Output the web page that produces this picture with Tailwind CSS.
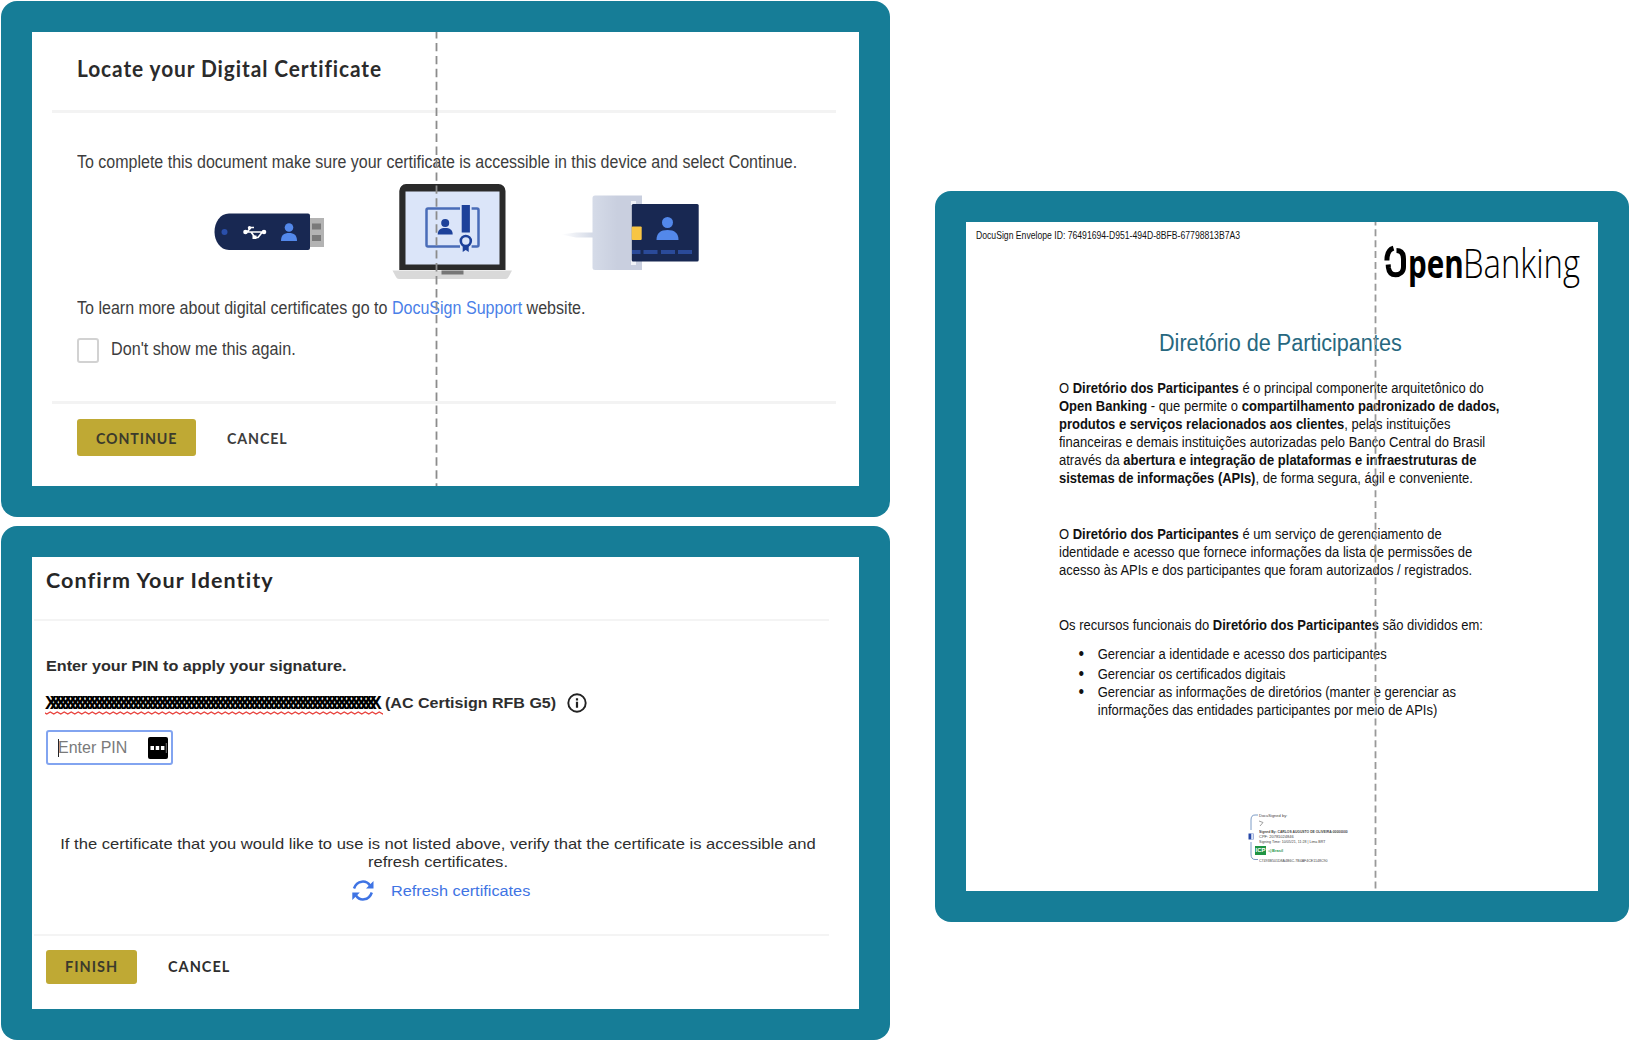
<!DOCTYPE html>
<html lang="pt-BR">
<head>
<meta charset="utf-8">
<title>Certificate signing</title>
<script src="https://cdn.jsdelivr.net/npm/@tailwindcss/browser@4"></script>
</head>
<body class="bg-white font-['Liberation_Sans',sans-serif] whitespace-nowrap overflow-hidden">
<main class="w-[1630px] h-[1041px] pl-px pt-px flex items-start gap-[45px]">

  <div class="flex flex-col gap-[9px]">

    <!-- Locate certificate -->
    <section class="relative w-[889px] h-[516px] rounded-2xl bg-[#167d97] p-[31px]">
      <div class="w-[827px] h-[454px] bg-white overflow-hidden text-[#3d3d3d]">
        <h1 class="mt-[22px] ml-[45px] h-7 leading-7 text-[23px] font-bold font-['Lato',sans-serif] tracking-[1px] origin-left scale-x-[.908] text-[#2b2b2b]">Locate your Digital Certificate</h1>
        <div class="mt-[28px] ml-5 w-[784px] h-[3px] bg-[#f3f3f3]"></div>
        <p class="mt-[39px] ml-[45px] h-5 leading-[21px] text-[17.5px] origin-left scale-x-[.914] w-[788px]">To complete this document make sure your certificate is accessible in this device and select Continue.</p>

        <div class="mt-2 ml-[182px] flex h-[100px]">
          <svg class="w-28 h-[100px]" viewBox="214 180 112 100">
            <rect x="309" y="218" width="15" height="29" fill="#b3b3b3"/>
            <path d="M312 223.500h9v6h-9zM312 235h9v6h-9z" fill="#7a7a7a"/>
            <path d="M229 213.500h79a2 2 0 0 1 2 2v32.500a2 2 0 0 1-2 2h-79c-9 0-14.500-9-14.500-18.200s5.500-18.300 14.500-18.300z" fill="#182852"/>
            <circle cx="224.500" cy="232" r="3" fill="#2a4faa"/>
            <g stroke="#fff" stroke-width="1.700" fill="none"><path d="M244 232h21M247 232l4-4.500h3M251 232l4 5.500h3l4-5"/></g>
            <g fill="#fff"><circle cx="245.500" cy="232" r="2.300"/><circle cx="264" cy="232" r="2.300"/><circle cx="249.500" cy="227.800" r="1.700"/><rect x="252.500" y="235.500" width="4" height="3.500"/></g>
            <circle cx="289" cy="227.500" r="4.300" fill="#5388ea"/>
            <path d="M281 241c0-6 3-8 8-8s8 2 8 8z" fill="#5388ea"/>
          </svg>
          <svg class="ml-16 w-[124px] h-[100px]" viewBox="390 180 124 100">
            <path d="M406 184h92.500a7 7 0 0 1 7 7v79h-106.200v-79a7 7 0 0 1 6.700-7z" fill="#2a2a2a"/>
            <rect x="405.500" y="191.500" width="94" height="73" fill="#dbe5f9"/>
            <path d="M392.500 270.500h119.500l-3.500 6.500q-.8 2-3 2h-106.500q-2.200 0-3-2z" fill="#d9d9d9"/>
            <path d="M441.500 270.500h22v4h-22z" fill="#777"/>
            <rect x="426.500" y="208.500" width="52" height="38" rx="1.500" fill="none" stroke="#4a6cb8" stroke-width="2.500"/>
            <rect x="460" y="204" width="11.600" height="45" fill="#dbe5f9"/>
            <rect x="461.700" y="205" width="8.200" height="27.500" fill="#1d419a"/>
            <circle cx="465.800" cy="241" r="5" fill="#dbe5f9" stroke="#1d419a" stroke-width="2.600"/>
            <path d="M462.700 246v6l3-2 3 2v-6z" fill="#1d419a"/>
            <circle cx="445.200" cy="223" r="4" fill="#1d419a"/>
            <path d="M437.700 234.500c0-5 3-6.500 7.500-6.500s7.500 1.500 7.500 6.500z" fill="#1d419a"/>
          </svg>
          <svg class="ml-[46px] w-[140px] h-[100px]" viewBox="560 180 140 100">
            <defs>
              <linearGradient id="reader"><stop offset="0" stop-color="#d5dbe8"/><stop offset=".5" stop-color="#c9cfdf"/></linearGradient>
              <linearGradient id="cord"><stop offset="0" stop-color="#d5dbe8" stop-opacity="0"/><stop offset="1" stop-color="#d3d9e6"/></linearGradient>
            </defs>
            <path d="M561 234.500l15-2h17v5h-17z" fill="url(#cord)"/>
            <path d="M595 195.500h47v74.500h-47a2.500 2.500 0 0 1-2.500-2.500v-69.500a2.500 2.500 0 0 1 2.500-2.500z" fill="url(#reader)"/>
            <rect x="631" y="201" width="5" height="64" fill="#f1f3f8"/>
            <rect x="631.700" y="204" width="67" height="57.500" rx="1.500" fill="#182852"/>
            <rect x="631.700" y="226.500" width="10" height="13.500" rx="1" fill="#f8c544"/>
            <circle cx="667.500" cy="222.500" r="5.500" fill="#5388ea"/>
            <path d="M656.500 240c0-7 4-10 11-10s11 3 11 10z" fill="#5388ea"/>
            <path d="M632 252h8.500M643.500 252h14M661 252h14M678 252h14" stroke="#2a4a99" stroke-width="4"/>
          </svg>
        </div>

        <p class="mt-[18px] ml-[45px] h-5 leading-[21px] text-[17.5px] origin-left scale-x-[.917] w-[556px]">To learn more about digital certificates go to <a class="text-[#4a7fe8]">DocuSign Support</a> website.</p>
        <label class="mt-5 ml-[45px] h-[25px] flex items-start">
          <span class="w-[22px] h-[25px] rounded-[3px] border-2 border-[#d2d2d2]"></span>
          <span class="mt-px ml-3 leading-[21px] text-[17.5px] origin-left scale-x-[.924]">Don't show me this again.</span>
        </label>
        <div class="mt-[38px] ml-5 w-[784px] h-[3px] bg-[#f3f3f3]"></div>
        <div class="mt-[15px] ml-[45px] flex items-center font-['Lato',sans-serif] font-bold text-[16px] tracking-[1px]">
          <button class="w-[119px] h-[37px] rounded-[3px] bg-[#bfa934] pl-[19px] text-left text-[#3b3a2c]"><span class="inline-block origin-left scale-x-[.89]">CONTINUE</span></button>
          <button class="ml-[31px] origin-left scale-x-[.89]">CANCEL</button>
        </div>
      </div>
      <svg class="absolute left-[434px] top-[31px] w-[3px] h-[454px]"><path d="M1.500-2V454" stroke="#8c8c8c" stroke-width="1.800" stroke-dasharray="8.400 4.550"/></svg>
    </section>

    <!-- Confirm identity -->
    <section class="w-[889px] h-[514px] rounded-2xl bg-[#167d97] p-[31px]">
      <div class="w-[827px] h-[452px] bg-white overflow-hidden text-[#2e2e2e]">
        <h1 class="mt-[11px] ml-[14px] h-6 leading-6 text-[20px] font-bold font-['Lato',sans-serif] tracking-[1px] origin-left scale-x-[1.075] w-[220px] text-[#262626]">Confirm Your Identity</h1>
        <div class="mt-[27px] ml-0.5 w-[795px] h-0.5 bg-[#f4f4f4]"></div>
        <p class="mt-[35px] ml-[14px] h-5 w-[300px] leading-5 text-[15.5px] font-bold origin-left scale-x-[1.045]">Enter your PIN to apply your signature.</p>
        <div class="mt-[17px] ml-[13px] h-[22px] flex items-start">
          <div class="w-[338px]">
            <div class="w-[338px] h-[18px] leading-5 text-[18px] font-bold text-black tracking-[-7.16px]">XXXXXXXXXXXXXXXXXXXXXXXXXXXXXXXXXXXXXXXXXXXXXXXXXXXXXXXXXXXXXXXXXXXX</div>
            <svg class="w-[338px] h-1"><defs><pattern id="wave" width="7" height="4" patternUnits="userSpaceOnUse"><path d="M-1.750 1L1.750 3L5.250 1L8.750 3" fill="none" stroke="#e8413c" stroke-width="1.400"/></pattern></defs><rect width="338" height="4" fill="url(#wave)"/></svg>
          </div>
          <span class="ml-0.5 leading-5 text-[15.5px] font-bold origin-left scale-x-[1.035]">(AC Certisign RFB G5)</span>
          <svg class="ml-[17px] w-5 h-5" viewBox="0 0 20 20"><circle cx="10" cy="10" r="8.700" fill="none" stroke="#222" stroke-width="1.900"/><path d="M8.900 5.300h2.200v2.200H8.900zM8.900 8.800h2.200v6H8.900z" fill="#222"/></svg>
        </div>
        <div class="mt-[15px] ml-[14px] w-[127px] h-[35px] rounded-[3px] border-2 border-[#82a4f0] flex items-center pl-[10px]">
          <span class="w-px h-[18px] bg-[#222]"></span>
          <span class="-ml-px text-[16px] text-[#7a7a7a] w-[68px]">Enter PIN</span>
          <svg class="ml-[22px] w-5 h-[22px]" viewBox="0 0 20 22"><rect width="20" height="22" rx="2" fill="#000"/><path d="M2.500 9h3.500v4h-3.500zM7.700 9h3.500v4h-3.500zM12.900 9h3.500v4h-3.500z" fill="#fff"/><path d="M18.300 6v10" stroke="#aaa" stroke-width=".7"/></svg>
        </div>
        <div class="mt-[70px] ml-[-15px] w-[842px] text-center text-[15px] leading-[18px] scale-x-[1.105]">
          <p>If the certificate that you would like to use is not listed above, verify that the certificate is accessible and</p>
          <p>refresh certificates.</p>
        </div>
        <div class="mt-[9px] ml-[319.5px] h-[21px] flex items-center text-[#3f74e4]">
          <svg class="w-[22px] h-[21px]" viewBox="0 0 22 21"><g fill="none" stroke="currentColor" stroke-width="2.500"><path d="M2 8.500C5-.3 14.500 0 18 5.500M19.800 12.500C16.800 21.300 7.500 21 4 15.500"/></g><path d="M21.500 1V8.500H14zM.3 20V12.500H7.800z" fill="currentColor"/></svg>
          <span class="ml-[17px] text-[15.5px] leading-5 origin-left scale-x-[1.05]">Refresh certificates</span>
        </div>
        <div class="mt-[33px] ml-0.5 w-[795px] h-0.5 bg-[#f4f4f4]"></div>
        <div class="mt-[14px] ml-[14px] flex items-center font-['Lato',sans-serif] font-bold text-[14.5px] tracking-[1px]">
          <button class="w-[91px] h-[34px] rounded-[3px] bg-[#bfa934] pl-[19px] text-left text-[#3b3a2c]">FINISH</button>
          <button class="ml-[31px]">CANCEL</button>
        </div>
      </div>
    </section>
  </div>

  <!-- Document -->
  <section class="relative mt-[190px] w-[694px] h-[731px] rounded-2xl bg-[#167d97] p-[31px]">
    <div class="w-[632px] h-[669px] bg-white overflow-hidden text-[#111]">
      <header class="h-[107px] flex items-start">
        <span class="mt-[6px] ml-[10px] w-[408px] h-[14px] leading-[14px] text-[11px]"><span class="inline-block origin-left scale-x-[.785]">DocuSign Envelope ID: 76491694-D951-494D-8BFB-67798813B7A3</span></span>
        <div class="mt-[19px] h-[50px] flex items-start text-black font-['Open_Sans',sans-serif] text-[40px] leading-[44px]">
          <svg class="mt-1 w-[23px] h-[34px]" viewBox="0 0 23 34"><g fill="none" stroke="#000" stroke-width="5"><path d="M9.500 3.200C5 4.500 2.900 8 2.900 15.500"/><path d="M12.500 5.500C17.500 5.500 19.500 9 19.500 14V22C19.500 27 16 29.800 11.500 29.800C8 29.800 5 27.500 4.400 22.500L4.200 19.500"/></g></svg>
          <span class="ml-px w-[55px] font-bold"><span class="inline-block origin-left scale-x-[.74]">pen</span></span>
          <span class="w-[116px] font-light"><span class="inline-block origin-left scale-x-[.82]">Banking</span></span>
        </div>
      </header>
      <h1 class="ml-[193px] h-7 leading-7 text-[23.5px] origin-left scale-x-[.92] text-[#27687f]">Diretório de Participantes</h1>

      <div class="mt-[21.500px] ml-[93px] w-[500px] origin-left scale-x-[.881] text-[14.75px] leading-[18.1px]">
        <p>O <b>Diretório dos Participantes</b> é o principal componente arquitetônico do<br><b>Open Banking</b> - que permite o <b>compartilhamento padronizado de dados,</b><br><b>produtos e serviços relacionados aos clientes</b>, pelas instituições<br>financeiras e demais instituições autorizadas pelo Banco Central do Brasil<br>através da <b>abertura e integração de plataformas e infraestruturas de</b><br><b>sistemas de informações (APIs)</b>, de forma segura, ágil e conveniente.</p>
        <p class="mt-[37.500px]">O <b>Diretório dos Participantes</b> é um serviço de gerenciamento de<br>identidade e acesso que fornece informações da lista de permissões de<br>acesso às APIs e dos participantes que foram autorizados / registrados.</p>
        <p class="mt-[37.500px]">Os recursos funcionais do <b>Diretório dos Participantes</b> são divididos em:</p>
        <ul class="mt-[11px] ml-[44px]">
          <li class="flex mb-[1px]"><span class="-ml-[22px] w-[22px] text-[18px]">•</span>Gerenciar a identidade e acesso dos participantes</li>
          <li class="flex"><span class="-ml-[22px] w-[22px] text-[18px]">•</span>Gerenciar os certificados digitais</li>
          <li class="flex"><span class="-ml-[22px] w-[22px] text-[18px]">•</span><span>Gerenciar as informações de diretórios (manter e gerenciar as<br>informações das entidades participantes por meio de APIs)</span></li>
        </ul>
      </div>

      <!-- Signature stamp -->
      <div class="mt-[92px] ml-[281px] w-[104px] h-[52px] flex">
        <svg class="w-3 h-[52px]" viewBox="0 0 12 52"><path d="M11 4H8Q4 4 4 9V19M4 31V43Q4 48.500 8 48.500H11" fill="none" stroke="#7d9cc6"/><path d="M1.500 22.500h5v6h-5z" fill="#2748a8"/><path d="M4.200 22.500h2v6h-2z" fill="#dfe6f6"/></svg>
        <div class="w-[90px] text-[4px] leading-[5px] text-[#444]">
          <p class="mt-[2px]">DocuSigned by:</p>
          <svg class="mt-0.5 w-3 h-[7px]"><path d="M0 1L4 2.500L1 6" fill="none" stroke="#888" stroke-width=".8"/></svg>
          <p class="mt-0.5 origin-left scale-x-[.84] font-bold">Signed By: CARLOS AUGUSTO DE OLIVEIRA:00000000</p>
          <p>CPF: 20781024846</p>
          <p class="origin-left scale-x-[.9]">Signing Time: 10/05/21, 11:28 | Lima BRT</p>
          <div class="-ml-1 mt-0.5 flex items-center text-[#2a9a4c]"><span class="w-[11px] h-[9px] bg-[#1f9443] text-white text-[6px] leading-[9px] font-bold text-center">ICP</span><span class="ml-0.5 font-bold">◁ Brasil</span></div>
          <p class="mt-[3px] origin-left scale-x-[.9]">C7493B501D8A4B6C-7B4AF4CE1148C90</p>
        </div>
      </div>
    </div>
    <svg class="absolute left-[439px] top-[31px] w-[3px] h-[669px]"><path d="M1.500-3.500V669" stroke="#999" stroke-width="1.800" stroke-dasharray="7 3.870"/></svg>
  </section>
</main>
</body>
</html>
